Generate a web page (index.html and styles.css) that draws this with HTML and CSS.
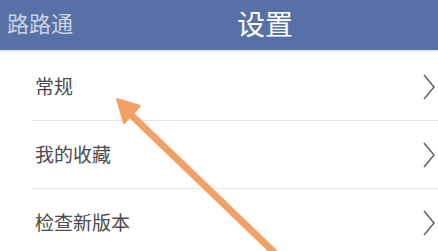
FILE: index.html
```html
<!DOCTYPE html>
<html lang="zh">
<head>
<meta charset="utf-8">
<link rel="stylesheet" href="styles.css">
</head>
<body>
<div class="screen">
  <header class="bar">
    <span class="back">路路通</span>
    <span class="title">设置</span>
  </header>
  <ul class="list">
    <li class="row"><span class="label">常规</span><svg class="chev" viewBox="0 0 12 26"><path d="M1 1 L11 13 L1 25" /></svg></li>
    <li class="row"><span class="label">我的收藏</span><svg class="chev" viewBox="0 0 12 26"><path d="M1 1 L11 13 L1 25" /></svg></li>
    <li class="row"><span class="label">检查新版本</span><svg class="chev" viewBox="0 0 12 26"><path d="M1 1 L11 13 L1 25" /></svg></li>
  </ul>
  <svg class="arrow" viewBox="0 0 438 251" width="438" height="251">
    <line x1="127" y1="111" x2="278" y2="256" />
    <polygon points="117,99 140,106 124,123" />
  </svg>
</div>
</body>
</html>
```
FILE: styles.css
```css
* { box-sizing: border-box; }
html, body { margin: 0; padding: 0; background: #fff; }
body { font-family: "Noto Sans CJK SC", "Noto Sans", sans-serif; }
.screen { position: relative; width: 438px; height: 251px; overflow: hidden; }
.bar {
  height: 50px;
  background: #5771a6;
  display: flex;
  align-items: center;
  position: relative;
  box-shadow: 0 1px 2px rgba(60, 80, 120, 0.25);
}
.back {
  margin-left: 7px;
  font-size: 22px;
  color: #c9d1e2;
  line-height: 1;
  margin-top: -6px;
}
.title {
  margin-left: 164px;
  font-size: 28px;
  color: #fff;
  line-height: 1;
  margin-top: -4px;
}
.list { list-style: none; margin: 3px 0 0 32px; padding: 0; }
.row {
  height: 68px;
  border-bottom: 1px solid #e6e6e6;
  display: flex;
  align-items: center;
  justify-content: space-between;
  padding: 0 3px 0 3px;
}
.label { font-size: 19px; color: #4a4a4a; line-height: 1; margin-top: -2px; }
.chev { width: 12px; height: 26px; fill: none; stroke: #666; stroke-width: 1.6; }
.arrow { position: absolute; left: 0; top: 0; }
.arrow line { stroke: #f2a065; stroke-width: 7; }
.arrow polygon { fill: #f2a065; stroke: #f2a065; stroke-width: 2; stroke-linejoin: round; }
```
